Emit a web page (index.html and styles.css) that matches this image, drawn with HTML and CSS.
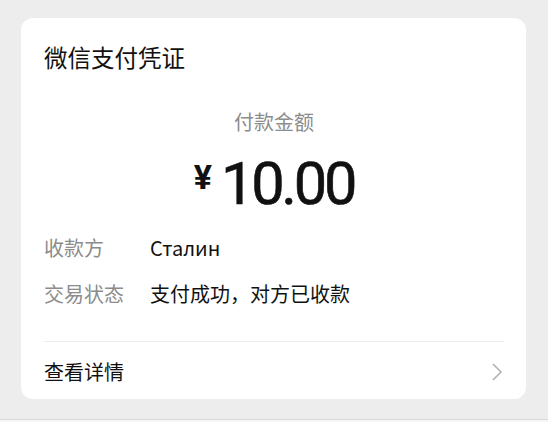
FILE: index.html
```html
<!DOCTYPE html>
<html lang="zh">
<head>
<meta charset="utf-8">
<link rel="stylesheet" href="styles.css">
</head>
<body>
<div class="card">
  <div class="title">微信支付凭证</div>
  <div class="amount-label">付款金额</div>
  <div class="amount"><span class="yen">¥</span><span class="num">10.00</span></div>
  <div class="row"><span class="key">收款方</span><span class="val">Сталин</span></div>
  <div class="row row2"><span class="key">交易状态</span><span class="val">支付成功，对方已收款</span></div>
  <div class="divider"></div>
  <div class="detail">
    <span>查看详情</span>
    <svg class="chev" width="12" height="20" viewBox="0 0 12 20"><path d="M2 2 L10 10 L2 18" fill="none" stroke="#b2b2b2" stroke-width="1.6"/></svg>
  </div>
</div>
<div class="footer"></div>
</body>
</html>
```
FILE: styles.css
```css
html, body { margin: 0; padding: 0; }
body {
  background: #ededed;
  font-family: "Noto Sans CJK SC", "Noto Sans", sans-serif;
  color: #111;
  width: 548px;
  height: 422px;
  overflow: hidden;
}
.card {
  margin: 18px 22px 0 21px;
  height: 381px;
  background: #fff;
  border-radius: 12px;
  padding: 0 22px 0 23px;
  box-sizing: border-box;
  display: flex;
  flex-direction: column;
}
.title {
  font-size: 23.5px;
  line-height: 32px;
  margin-top: 23px;
}
.amount-label {
  text-align: center;
  font-size: 20px;
  line-height: 28px;
  color: #8c8c8c;
  margin-top: 35px;
}
.amount {
  display: flex;
  justify-content: center;
  align-items: flex-start;
  margin-top: 17px;
  height: 62px;
}
.yen {
  font-family: Roboto, "Noto Sans", sans-serif;
  font-weight: 700;
  font-size: 34px;
  line-height: 40px;
  margin-right: 9px;
  margin-top: 4px;
}
.num {
  font-family: Roboto, "Noto Sans", sans-serif;
  font-weight: 400;
  font-size: 59.5px;
  line-height: 62px;
  letter-spacing: -3.2px;
  -webkit-text-stroke: 0.6px #111;
}
.row {
  display: flex;
  font-size: 20px;
  line-height: 28px;
  margin-top: 19px;
}
.row2 { margin-top: 18px; }
.key { width: 106px; color: #8c8c8c; }
.val { color: #111; }
.divider {
  height: 1px;
  background: #ececec;
  margin-top: 33px;
}
.detail {
  display: flex;
  justify-content: space-between;
  align-items: center;
  font-size: 20px;
  line-height: 28px;
  margin-top: 16px;
}
.chev { margin-right: 1px; }
.footer {
  margin-top: 20px;
  height: 3px;
  border-top: 1px solid #dadada;
  background: #f6f6f6;
}
```
